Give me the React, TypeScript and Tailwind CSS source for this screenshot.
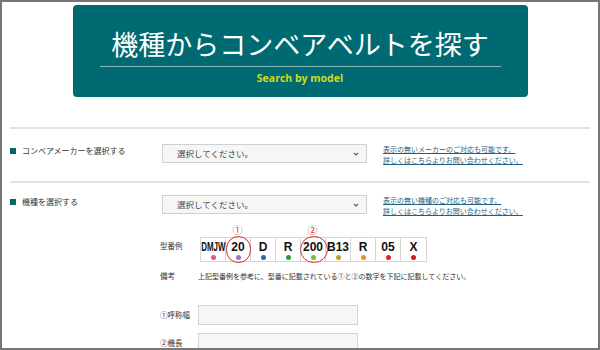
import React from 'react';

const jp = { fontFamily: '"Noto Sans CJK JP", "Noto Sans", sans-serif' };

const parts = [
  { t: 'DMJW', c: '#e5509a', small: true },
  { t: '20', c: '#a174c4', ring: '①' },
  { t: 'D', c: '#1f6db3' },
  { t: 'R', c: '#2a9b43' },
  { t: '200', c: '#7cb83c', ring: '②' },
  { t: 'B13', c: '#b4a52b' },
  { t: 'R', c: '#f08a21' },
  { t: '05', c: '#e2202c' },
  { t: 'X', c: '#d2181c' },
];

function Select() {
  return (
    <div className="flex items-center justify-between w-[205px] h-[19px] bg-[#f6f6f6] border border-[#cfcfcf] pl-[14px] pr-[7px] text-[8.5px] text-[#444]">
      <span>選択してください。</span>
      <svg width="6" height="4" viewBox="0 0 6 4">
        <path d="M0.8 0.8 L3 3 L5.2 0.8" fill="none" stroke="#555" strokeWidth="1.1" />
      </svg>
    </div>
  );
}

function Row({ label, line1 }: { label: string; line1: string }) {
  return (
    <div className="flex items-start">
      <div className="w-[152px] flex items-center gap-[6px] pt-[1px] text-[8px] text-[#333]">
        <span className="w-[6px] h-[6px] bg-[#06646c]" />
        <span>{label}</span>
      </div>
      <Select />
      <div className="ml-[16px] text-[7px] leading-[11px] text-[#1f5f80] underline">
        <div>{line1}</div>
        <div>詳しくはこちらよりお問い合わせください。</div>
      </div>
    </div>
  );
}

export default function App() {
  return (
    <div className="w-[600px] h-[350px] border-2 border-[#767676] bg-white overflow-hidden" style={jp}>
      <div className="mx-auto mt-[3px] w-[455px] h-[92px] rounded-[4px] bg-[#006a72] pt-[25px] flex flex-col items-center">
        <div className="text-[27px] leading-[27px] text-white">機種からコンベアベルトを探す</div>
        <div className="self-stretch mx-[27px] mt-[9px] h-[1px] bg-[#8bb5b9]" />
        <div className="mt-[6px] text-[10.5px] leading-[11px] font-bold text-[#cfdc1c]" style={{ fontFamily: '"Open Sans", sans-serif' }}>
          Search by model
        </div>
      </div>

      <div className="mx-[8px] mt-[30px]">
        <div className="h-[2px] bg-[#e2e2e2]" />
        <div className="py-[15px]">
          <Row label="コンベアメーカーを選択する" line1="表示の無いメーカーのご対応も可能です。" />
        </div>
        <div className="h-[2px] bg-[#e2e2e2]" />
        <div className="pt-[12px]">
          <Row label="機種を選択する" line1="表示の無い機種のご対応も可能です。" />
        </div>

        <div className="ml-[150px] text-[7.5px] text-[#333]">
          <div className="flex mt-[8px]">
            <div className="w-[40px]" />
            <div className="flex">
              {parts.map((p, i) => (
                <div key={i} className="w-[25px] h-[10px] flex justify-center items-center text-[10px] leading-[10px] text-[#d4302a]">
                  {p.ring ?? ''}
                </div>
              ))}
            </div>
          </div>
          <div className="flex mt-[2px]">
            <div className="w-[40px] pt-[3px]">型番例</div>
            <div className="flex h-[25px] border border-[#d6d6d6]">
              {parts.map((p, i) => (
                <div
                  key={i}
                  className="relative w-[25px] flex flex-col items-center pt-[3px] border-r border-[#d6d6d6] last:border-r-0"
                  style={{ fontFamily: '"Liberation Sans", Arial, sans-serif' }}
                >
                  <span
                    className={
                      p.small
                        ? 'inline-block text-[12px] leading-[12px] font-bold text-[#111] scale-x-[0.66]'
                        : 'text-[12px] leading-[12px] font-bold text-[#111]'
                    }
                  >
                    {p.t}
                  </span>
                  <span className="mt-[2px] w-[5px] h-[5px] rounded-full" style={{ background: p.c }} />
                  {p.ring && (
                    <span
                      className={
                        p.t === '200'
                          ? 'absolute left-[-1px] top-[-2px] w-[28px] h-[27px] rounded-full border-[1.5px] border-[#d4302a]'
                          : 'absolute left-[0px] top-[-2px] w-[25px] h-[27px] rounded-full border-[1.5px] border-[#d4302a]'
                      }
                    />
                  )}
                </div>
              ))}
            </div>
          </div>
          <div className="flex mt-[8px] leading-[12px]">
            <div className="w-[38px]">備考</div>
            <div className="text-[7px]">上記型番例を参考に、型番に記載されている①と②の数字を下記に記載してください。</div>
          </div>
          <div className="flex items-center mt-[23px]">
            <div className="w-[38px]">①呼称幅</div>
            <div className="w-[160px] h-[20px] bg-[#f6f6f6] border border-[#d2d2d2]" />
          </div>
          <div className="flex items-center mt-[8px]">
            <div className="w-[38px]">②機長</div>
            <div className="w-[160px] h-[20px] bg-[#f6f6f6] border border-[#d2d2d2]" />
          </div>
        </div>
      </div>
    </div>
  );
}
